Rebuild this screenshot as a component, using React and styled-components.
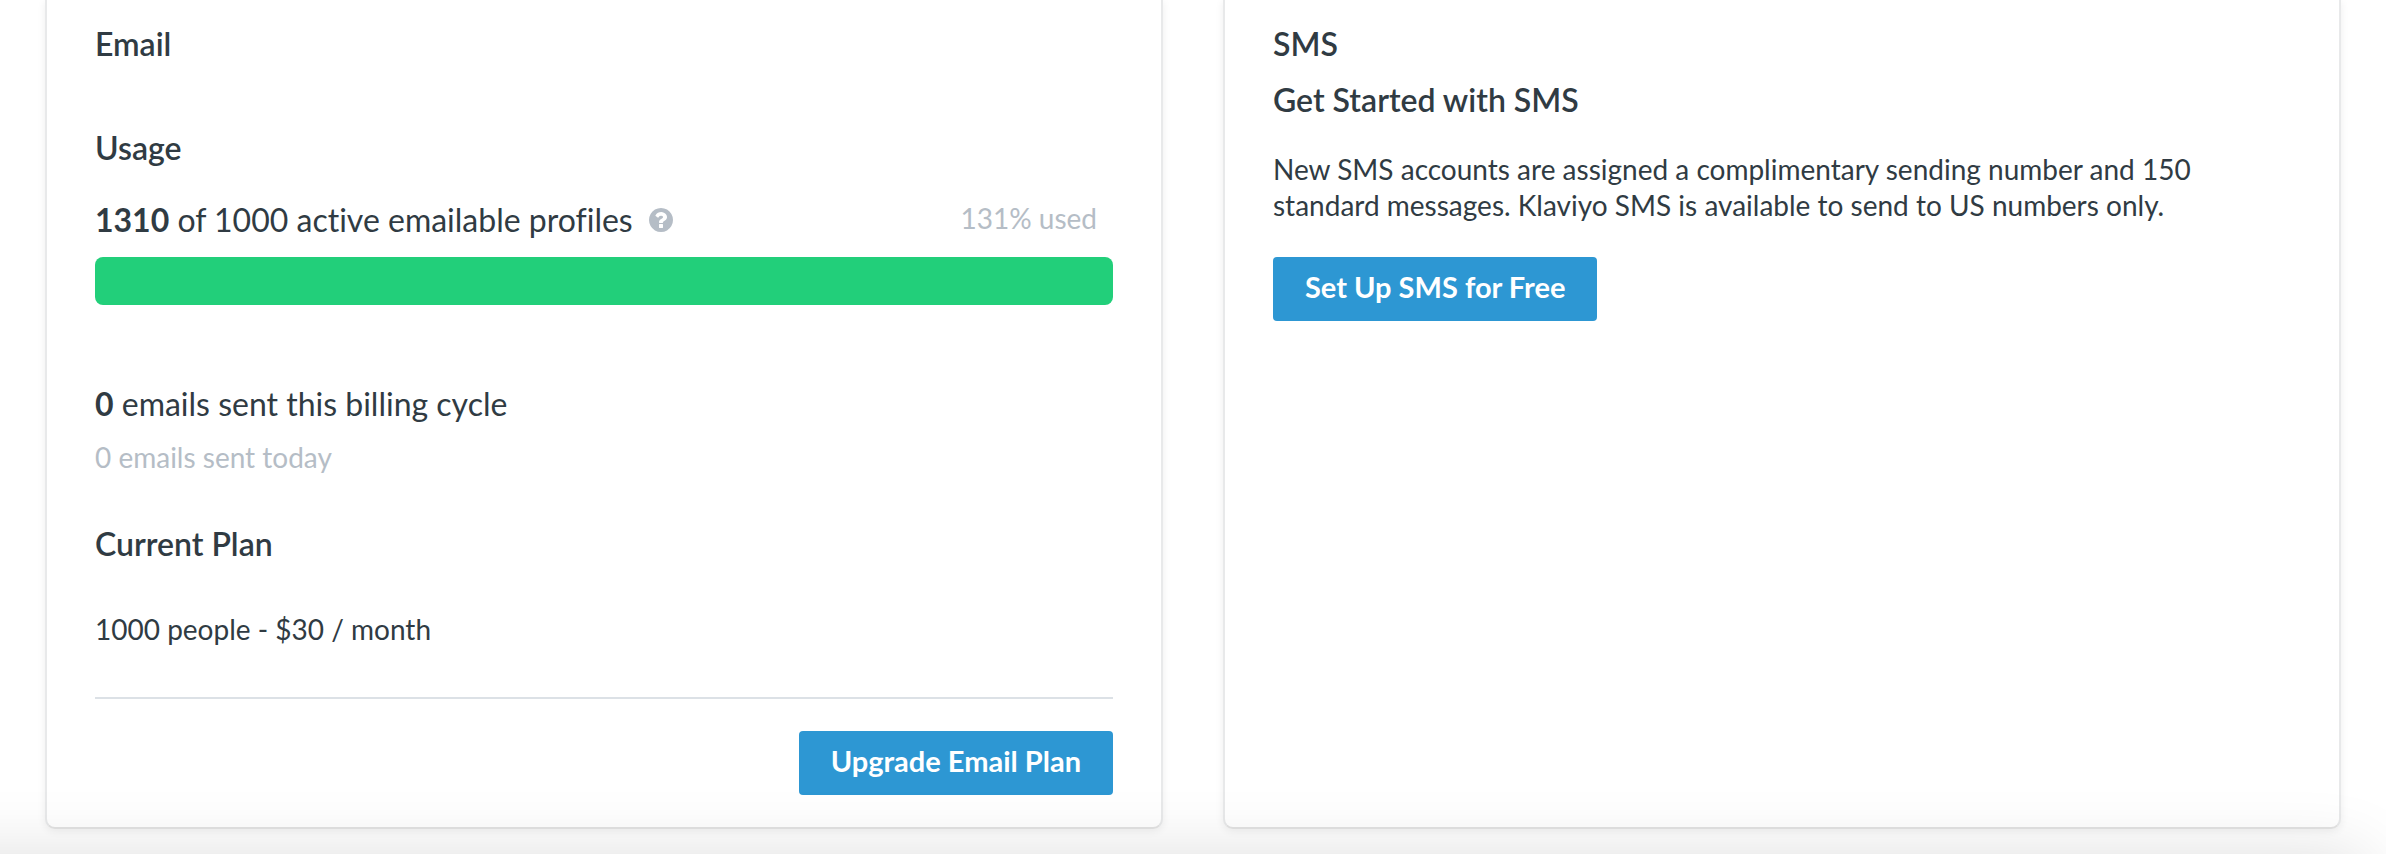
import styled, { createGlobalStyle } from "styled-components";

const GlobalStyle = createGlobalStyle`
  * {
    box-sizing: border-box;
  }

  body {
    margin: 0;
    background: #fff;
    color: #303b43;
    font-family: Lato, "Open Sans", sans-serif;
    font-variant-ligatures: none;
  }
`;

const Page = styled.main`
  display: grid;
  grid-template-columns: 1fr 1fr;
  gap: 60px;
  padding: 0 45px 25px;
`;

const Card = styled.section`
  display: flex;
  flex-direction: column;
  align-items: stretch;
  padding: 24px 48px 32px;
  background: #fff;
  border: 2px solid #e8e9ea;
  border-top: 0;
  border-bottom-color: #e3e3e3;
  border-radius: 0 0 10px 10px;
  box-shadow: 0 2px 8px rgba(0, 0, 0, 0.07);
`;

const Title = styled.h2`
  margin: 0;
  font-size: 32px;
  line-height: 40px;
  font-weight: 600;
`;

const Subtitle = styled.h3`
  margin: ${(props) => props.$space}px 0 0;
  font-size: 32px;
  line-height: 40px;
  font-weight: 600;
`;

const UsageRow = styled.div`
  display: flex;
  align-items: flex-start;
  justify-content: space-between;
  margin-top: 32px;
  padding-right: 16px;
`;

const UsageLabel = styled.div`
  display: flex;
  align-items: center;
  gap: 16px;
`;

const Stat = styled.p`
  margin: 0;
  font-size: 32px;
  line-height: 40px;
`;

const Text = styled.p`
  margin: 0;
  font-size: 28px;
  line-height: 36px;
`;

const MutedText = styled(Text)`
  color: #b5bdc6;
`;

const HelpButton = styled.button`
  display: flex;
  padding: 0;
  border: 0;
  background: none;
  color: #b5bdc6;
  cursor: pointer;
`;

const Track = styled.div`
  height: 48px;
  margin: 17px 0 79px;
  overflow: hidden;
  border-radius: 8px;
  background: #e9ecef;
`;

const Fill = styled.div`
  height: 100%;
  background: #22cf7a;
`;

const SentToday = styled(MutedText)`
  margin-top: 15px;
`;

const PlanText = styled(Text)`
  margin-top: 47px;
`;

const Description = styled(Text)`
  max-width: 960px;
  margin: 31px 0 34px;
`;

const CardFooter = styled.footer`
  display: flex;
  justify-content: flex-end;
  margin-top: 50px;
  padding-top: 32px;
  border-top: 2px solid #dce1e6;
`;

const Button = styled.button`
  align-self: flex-start;
  height: 64px;
  padding: 0 32px 4px;
  border: 0;
  border-radius: 4px;
  background: #2d97d3;
  color: #fff;
  font-family: inherit;
  font-size: 29px;
  font-weight: 700;
  line-height: 36px;
  cursor: pointer;
`;

// soft shade along the bottom edge of the window
const BottomShade = styled.div`
  position: fixed;
  left: -100px;
  right: 20px;
  bottom: -100px;
  height: 100px;
  box-shadow: 0 0 68px rgba(0, 0, 0, 0.13);
  pointer-events: none;
`;

const HelpIcon = () => (
  <svg
    width="24"
    height="24"
    viewBox="128 128 1536 1536"
    fill="currentColor"
    aria-hidden="true"
  >
    <path d="M1024 1376v-192q0-14-9-23t-23-9h-192q-14 0-23 9t-9 23v192q0 14 9 23t23 9h192q14 0 23-9t9-23zm256-672q0-88-55.5-163t-138.5-116-170.5-41q-243 0-371 213-15 24 8 42l132 100q7 6 19 6 16 0 25-12 53-68 86-92 34-24 86-24 48 0 85.500 26t37.500 59q0 38-20 61t-68 45q-63 28-115.500 86.500t-52.500 125.500v36q0 14 9 23t23 9h192q14 0 23-9t9-23q0-19 21.500-49.500t54.500-49.500q32-18 49-28.500t46-35 44.500-48 28-60.500 12.500-81zm384 192q0 209-103 385.500t-279.500 279.500-385.500 103-385.500-103-279.500-279.500-103-385.500 103-385.500 279.500-279.500 385.500-103 385.500 103 279.500 279.500 103 385.500z" />
  </svg>
);

const UsageBar = ({ used, limit }) => {
  const percent = Math.round((used / limit) * 100);
  return (
    <>
      <UsageRow>
        <UsageLabel>
          <Stat>
            <strong>{used}</strong> of {limit} active emailable profiles
          </Stat>
          <HelpButton type="button" aria-label="About active profiles">
            <HelpIcon />
          </HelpButton>
        </UsageLabel>
        <MutedText>{percent}% used</MutedText>
      </UsageRow>
      <Track>
        <Fill style={{ width: `${Math.min(percent, 100)}%` }} />
      </Track>
    </>
  );
};

const App = () => {
  return (
    <>
      <GlobalStyle />
      <Page>
        <Card>
          <Title>Email</Title>
          <Subtitle $space={64}>Usage</Subtitle>
          <UsageBar used={1310} limit={1000} />
          <Stat>
            <strong>0</strong> emails sent this billing cycle
          </Stat>
          <SentToday>0 emails sent today</SentToday>
          <Subtitle $space={49}>Current Plan</Subtitle>
          <PlanText>1000 people - $30 / month</PlanText>
          <CardFooter>
            <Button type="button">Upgrade Email Plan</Button>
          </CardFooter>
        </Card>
        <Card>
          <Title>SMS</Title>
          <Subtitle $space={16}>Get Started with SMS</Subtitle>
          <Description>
            New SMS accounts are assigned a complimentary sending number and 150
            standard messages. Klaviyo SMS is available to send to US numbers
            only.
          </Description>
          <Button type="button">Set Up SMS for Free</Button>
        </Card>
      </Page>
      <BottomShade />
    </>
  );
};

export default App;
